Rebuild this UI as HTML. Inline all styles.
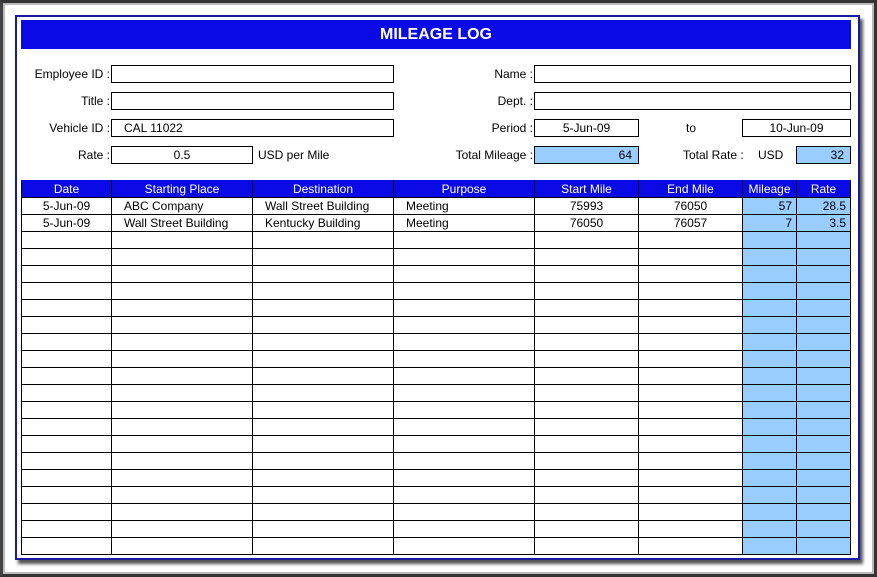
<!DOCTYPE html>
<html><head><style>
body{margin:0;width:877px;height:577px;background:#fff;position:relative;overflow:hidden;font-family:"Liberation Sans",sans-serif;font-size:12px;color:#000}
.a{position:absolute;box-sizing:border-box}
.box{position:absolute;box-sizing:border-box;border:1px solid #000;height:18px;line-height:16px;padding:0 6px}
.lb{position:absolute;text-align:right;line-height:18px}
table{position:absolute;left:21px;top:180px;border-collapse:collapse;table-layout:fixed}
td{border:1px solid #000;height:16px;padding:0 4px;line-height:16px;font-size:12px;white-space:nowrap;overflow:hidden}
th{background:#0a0ae6;color:#fff;font-weight:normal;height:16px;border:1px solid #000;border-top:none;font-size:12px;padding:0}
.c{text-align:center}.r{text-align:right}.bl{background:#99ccff}
</style></head><body>
<div class="a" style="left:0;top:0;width:877px;height:577px;border:3px solid #333;border-left-color:#444;box-shadow:inset 0 0 0 2px #bbb"></div>
<div class="a" style="left:15px;top:15px;width:845px;height:545px;border:2px solid #1a1aa0;box-shadow:3px 4px 3px #555;background:#fff"></div>
<div class="a" style="left:21px;top:20px;width:830px;height:29px;background:#0a0ae6;color:#fff;font-weight:bold;font-size:16px;text-align:center;line-height:29px">MILEAGE LOG</div>

<div class="lb" style="left:10px;top:65px;width:100px">Employee ID :</div>
<div class="box" style="left:111px;top:65px;width:283px"></div>
<div class="lb" style="left:10px;top:92px;width:100px">Title :</div>
<div class="box" style="left:111px;top:92px;width:283px"></div>
<div class="lb" style="left:10px;top:119px;width:100px">Vehicle ID :</div>
<div class="box" style="left:111px;top:119px;width:283px;padding-left:12px">CAL 11022</div>
<div class="lb" style="left:10px;top:146px;width:100px">Rate :</div>
<div class="box" style="left:111px;top:146px;width:142px;text-align:center">0.5</div>
<div class="a" style="left:258px;top:146px;line-height:18px">USD per Mile</div>

<div class="lb" style="left:420px;top:65px;width:113px">Name :</div>
<div class="box" style="left:534px;top:65px;width:317px"></div>
<div class="lb" style="left:420px;top:92px;width:113px">Dept. :</div>
<div class="box" style="left:534px;top:92px;width:317px"></div>
<div class="lb" style="left:420px;top:119px;width:113px">Period :</div>
<div class="box" style="left:534px;top:119px;width:105px;text-align:center">5-Jun-09</div>
<div class="a" style="left:686px;top:119px;line-height:18px">to</div>
<div class="box" style="left:742px;top:119px;width:109px;text-align:center">10-Jun-09</div>
<div class="lb" style="left:420px;top:146px;width:113px">Total Mileage :</div>
<div class="box bl" style="left:534px;top:146px;width:105px;text-align:right">64</div>
<div class="a" style="left:683px;top:146px;line-height:18px">Total Rate :</div>
<div class="a" style="left:758px;top:146px;line-height:18px">USD</div>
<div class="box bl" style="left:796px;top:146px;width:55px;text-align:right">32</div>

<table>
<colgroup><col style="width:90px"><col style="width:141px"><col style="width:141px"><col style="width:141px"><col style="width:104px"><col style="width:104px"><col style="width:54px"><col style="width:54px"></colgroup>
<tr><th style="height:17px">Date</th><th>Starting Place</th><th>Destination</th><th>Purpose</th><th>Start Mile</th><th>End Mile</th><th>Mileage</th><th>Rate</th></tr>
<tr><td class="c">5-Jun-09</td><td style="padding-left:12px">ABC Company</td><td style="padding-left:12px">Wall Street Building</td><td style="padding-left:12px">Meeting</td><td class="c">75993</td><td class="c">76050</td><td class="r bl">57</td><td class="r bl">28.5</td></tr>
<tr><td class="c">5-Jun-09</td><td style="padding-left:12px">Wall Street Building</td><td style="padding-left:12px">Kentucky Building</td><td style="padding-left:12px">Meeting</td><td class="c">76050</td><td class="c">76057</td><td class="r bl">7</td><td class="r bl">3.5</td></tr>
<tr><td></td><td></td><td></td><td></td><td></td><td></td><td class="bl"></td><td class="bl"></td></tr>
<tr><td></td><td></td><td></td><td></td><td></td><td></td><td class="bl"></td><td class="bl"></td></tr>
<tr><td></td><td></td><td></td><td></td><td></td><td></td><td class="bl"></td><td class="bl"></td></tr>
<tr><td></td><td></td><td></td><td></td><td></td><td></td><td class="bl"></td><td class="bl"></td></tr>
<tr><td></td><td></td><td></td><td></td><td></td><td></td><td class="bl"></td><td class="bl"></td></tr>
<tr><td></td><td></td><td></td><td></td><td></td><td></td><td class="bl"></td><td class="bl"></td></tr>
<tr><td></td><td></td><td></td><td></td><td></td><td></td><td class="bl"></td><td class="bl"></td></tr>
<tr><td></td><td></td><td></td><td></td><td></td><td></td><td class="bl"></td><td class="bl"></td></tr>
<tr><td></td><td></td><td></td><td></td><td></td><td></td><td class="bl"></td><td class="bl"></td></tr>
<tr><td></td><td></td><td></td><td></td><td></td><td></td><td class="bl"></td><td class="bl"></td></tr>
<tr><td></td><td></td><td></td><td></td><td></td><td></td><td class="bl"></td><td class="bl"></td></tr>
<tr><td></td><td></td><td></td><td></td><td></td><td></td><td class="bl"></td><td class="bl"></td></tr>
<tr><td></td><td></td><td></td><td></td><td></td><td></td><td class="bl"></td><td class="bl"></td></tr>
<tr><td></td><td></td><td></td><td></td><td></td><td></td><td class="bl"></td><td class="bl"></td></tr>
<tr><td></td><td></td><td></td><td></td><td></td><td></td><td class="bl"></td><td class="bl"></td></tr>
<tr><td></td><td></td><td></td><td></td><td></td><td></td><td class="bl"></td><td class="bl"></td></tr>
<tr><td></td><td></td><td></td><td></td><td></td><td></td><td class="bl"></td><td class="bl"></td></tr>
<tr><td></td><td></td><td></td><td></td><td></td><td></td><td class="bl"></td><td class="bl"></td></tr>
<tr><td></td><td></td><td></td><td></td><td></td><td></td><td class="bl"></td><td class="bl"></td></tr>
</table>
</body></html>
